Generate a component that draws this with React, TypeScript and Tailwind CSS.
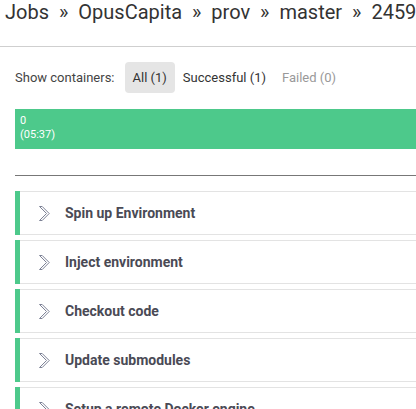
const steps = [
  "Spin up Environment",
  "Inject environment",
  "Checkout code",
  "Update submodules",
  "Setup a remote Docker engine",
];

function Chevron() {
  return (
    <svg width="13" height="17" viewBox="0 0 13 17" className="shrink-0">
      <path
        d="M1.5 1.5 L4.2 1.5 L11.2 8.5 L4.2 15.5 L1.5 15.5 L8.5 8.5 Z"
        fill="none"
        stroke="#7d8296"
        strokeWidth="1"
        strokeLinejoin="round"
      />
    </svg>
  );
}

export default function App() {
  return (
    <div className="w-[416px] h-[409px] overflow-hidden bg-white font-['Roboto',sans-serif]">
      <div className="w-[700px]">
        {/* breadcrumb */}
        <div className="h-[47px] border-b border-[#cfcfcf] pl-[5px]">
          <h1 className="text-[20px] leading-[24px] text-[#333] whitespace-nowrap">
            Jobs <span className="px-[5px]">»</span> OpusCapita <span className="px-[5px]">»</span> prov{" "}
            <span className="px-[5px]">»</span> master <span className="px-[5px]">»</span> 2459
          </h1>
        </div>

        <div className="px-[15px]">
          <div className="flex items-center mt-[15px] h-[31px] text-[13px] text-[#444]">
            <span className="mr-[10px]">Show containers:</span>
            <button className="h-[31px] px-2 rounded bg-[#e5e5e5] text-[#333]">All (1)</button>
            <button className="h-[31px] px-2 text-[#333]">Successful (1)</button>
            <button className="h-[31px] px-2 text-[#999]">Failed (0)</button>
          </div>

          <div className="mt-[16px] h-[40px] bg-[#4dc98b] pl-[5px] pt-[5px] text-[11px] leading-[14px] text-white">
            <div>0</div>
            <div>(05:37)</div>
          </div>

          <div className="mt-[26px] border-t border-[#777]" />

          <div className="mt-[15px] flex flex-col gap-[5px]">
            {steps.map((s) => (
              <div key={s} className="flex h-[44px]">
                <div className="w-[5px] bg-[#4dc98b]" />
                <div className="flex-1 flex items-center gap-[14px] pl-[18px] border-y border-[#e3e3e3]">
                  <Chevron />
                  <span className="text-[14px] font-bold text-[#4a4a55]">{s}</span>
                </div>
              </div>
            ))}
          </div>
        </div>
      </div>
    </div>
  );
}
